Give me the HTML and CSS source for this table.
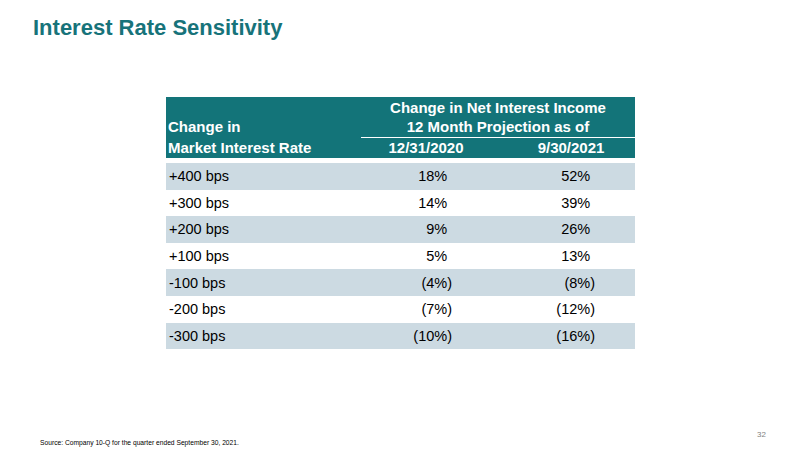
FILE: index.html
```html
<!DOCTYPE html>
<html>
<head>
<meta charset="utf-8">
<link rel="stylesheet" href="styles.css">
</head>
<body>
<div class="slide">
  <h1 class="title">Interest Rate Sensitivity</h1>
  <table class="sens">
    <colgroup>
      <col class="c1"><col class="c2"><col class="c3">
    </colgroup>
    <thead>
      <tr><th></th><th colspan="2" class="ctr">Change in Net Interest Income</th></tr>
      <tr><th class="lbl">Change in</th><th colspan="2" class="ctr under">12 Month Projection as of</th></tr>
      <tr><th class="lbl">Market Interest Rate</th><th class="d1">12/31/2020</th><th class="d2">9/30/2021</th></tr>
    </thead>
    <tbody>
      <tr class="band first"><td class="lbl">+400 bps</td><td class="num n1">18%<span class="pad">)</span></td><td class="num n2">52%<span class="pad">)</span></td></tr>
      <tr><td class="lbl">+300 bps</td><td class="num n1">14%<span class="pad">)</span></td><td class="num n2">39%<span class="pad">)</span></td></tr>
      <tr class="band"><td class="lbl">+200 bps</td><td class="num n1">9%<span class="pad">)</span></td><td class="num n2">26%<span class="pad">)</span></td></tr>
      <tr><td class="lbl">+100 bps</td><td class="num n1">5%<span class="pad">)</span></td><td class="num n2">13%<span class="pad">)</span></td></tr>
      <tr class="band"><td class="lbl">-100 bps</td><td class="num n1">(4%)</td><td class="num n2">(8%)</td></tr>
      <tr><td class="lbl">-200 bps</td><td class="num n1">(7%)</td><td class="num n2">(12%)</td></tr>
      <tr class="band"><td class="lbl">-300 bps</td><td class="num n1">(10%)</td><td class="num n2">(16%)</td></tr>
    </tbody>
  </table>
  <div class="footer">
    <span class="source">Source: Company 10-Q for the quarter ended September 30, 2021.</span>
    <span class="pageno">32</span>
  </div>
</div>
</body>
</html>
```

FILE: styles.css
```css
html, body {
  margin: 0;
  padding: 0;
  background: #ffffff;
}
body {
  font-family: "Liberation Sans", Arial, sans-serif;
}
.slide {
  width: 800px;
  height: 449px;
  display: flex;
  flex-direction: column;
  box-sizing: border-box;
  padding-top: 15px;
  overflow: hidden;
}
.title {
  margin: 0 0 0 33px;
  font-size: 22px;
  line-height: 26px;
  font-weight: bold;
  color: #17737a;
}
.sens {
  margin: 56px 0 0 166px;
  border-collapse: collapse;
  border-spacing: 0;
  width: 469px;
  table-layout: fixed;
}
.c1 { width: 195px; }
.c2 { width: 130px; }
.c3 { width: 144px; }
.sens thead th {
  background: #137479;
  color: #ffffff;
  font-size: 15px;
  font-weight: bold;
  line-height: 20px;
  height: 20px;
  padding: 0;
  text-align: center;
  white-space: nowrap;
}
.sens thead tr:first-child th {
  padding-top: 1px;
  height: 19px;
  line-height: 19px;
}
.sens thead th.lbl {
  text-align: left;
  padding-left: 2px;
}
.sens thead th.under {
  border-bottom: 1px solid #ffffff;
}
.sens thead th.d2 {
  padding-left: 16px;
}
.sens tbody td {
  font-size: 14.5px;
  color: #000000;
  height: 26.6px;
  line-height: 18px;
  padding: 0;
  white-space: nowrap;
}
.sens tbody tr.first td {
  border-top: 5px solid #ffffff;
}
.sens tbody tr.band td {
  background: #ccdae2;
}
.sens td.lbl {
  padding-left: 3px;
}
.sens td.num {
  text-align: right;
}
.sens td.n1 { padding-right: 39px; }
.sens td.n2 { padding-right: 40px; }
.pad { visibility: hidden; }
.footer {
  margin-top: auto;
  display: flex;
  justify-content: space-between;
  align-items: flex-end;
  padding: 0 34px 2px 40px;
}
.source {
  font-size: 6.7px;
  line-height: 8px;
  color: #000000;
}
.pageno {
  font-size: 8px;
  line-height: 10px;
  color: #7f7f7f;
  margin-bottom: 7px;
}
```
